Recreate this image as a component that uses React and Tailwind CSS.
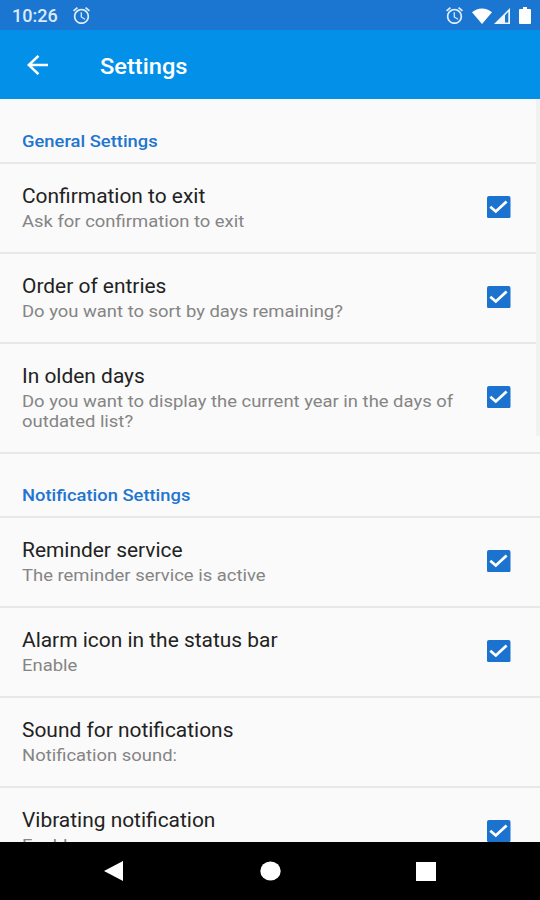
import React, { useState } from 'react';

const sections = [
  {
    title: 'General Settings',
    items: [
      { id: 'exit', label: 'Confirmation to exit', summary: 'Ask for confirmation to exit', checkable: true },
      { id: 'order', label: 'Order of entries', summary: 'Do you want to sort by days remaining?', checkable: true },
      {
        id: 'olden',
        label: 'In olden days',
        summary: 'Do you want to display the current year in the days of outdated list?',
        checkable: true
      }
    ]
  },
  {
    title: 'Notification Settings',
    items: [
      { id: 'reminder', label: 'Reminder service', summary: 'The reminder service is active', checkable: true },
      { id: 'alarm', label: 'Alarm icon in the status bar', summary: 'Enable', checkable: true },
      { id: 'sound', label: 'Sound for notifications', summary: 'Notification sound:', checkable: false },
      { id: 'vibrate', label: 'Vibrating notification', summary: 'Enable', checkable: true }
    ]
  }
];

const AlarmIcon = () => (
  <svg className="h-[17px] w-[17px]" viewBox="2 1.8 20 20.2" preserveAspectRatio="none" fill="#e0edfa">
    <path d="M22 5.72l-4.6-3.86-1.29 1.53 4.6 3.86L22 5.72zM7.88 3.39L6.6 1.86 2 5.71l1.29 1.53 4.59-3.85zM12.5 8H11v6l4.75 2.85.75-1.23-4-2.37V8zM12 4c-4.97 0-9 4.03-9 9s4.02 9 9 9c4.97 0 9-4.03 9-9s-4.03-9-9-9zm0 16c-3.87 0-7-3.13-7-7s3.13-7 7-7 7 3.13 7 7-3.13 7-7 7z" />
  </svg>
);

const StatusBar = () => (
  <div className="flex h-[30px] shrink-0 items-center bg-[#1b76d2] pl-3 pr-[9px] pt-px">
    <span className="w-[61px] pt-px text-[18px] font-medium leading-none text-[#dceafa]">10:26</span>
    <AlarmIcon />
    <div className="ml-auto flex items-center">
      <AlarmIcon />
      <svg className="ml-[9px] h-4 w-5" viewBox="0 0 20 16" fill="#fff">
        <path d="M10 16L0 4.2C5.5-.9 14.5-.9 20 4.2z" />
      </svg>
      <svg className="ml-[2px] h-4 w-4" viewBox="0 0 16 16">
        <path d="M0 16L16 0V16z" fill="#eef5fc" />
        <path d="M11 7.2L14.3 3.8V14.5H11z" fill="#1b76d2" />
      </svg>
      <svg className="ml-[9px] h-[17px] w-3" viewBox="0 0 12 17" fill="#fff">
        <path d="M4 0h4v2h3a1 1 0 0 1 1 1v13a1 1 0 0 1-1 1H1a1 1 0 0 1-1-1V3a1 1 0 0 1 1-1h3z" />
      </svg>
    </div>
  </div>
);

const AppBar = () => (
  <header className="flex h-[69px] shrink-0 items-center bg-[#0290e9] pl-[27px] text-white">
    <button aria-label="Back" className="w-[73px]">
      <svg className="h-5 w-[21px]" viewBox="4 4 16 16" preserveAspectRatio="none" fill="currentColor">
        <path d="M20 11H7.83l5.59-5.59L12 4l-8 8 8 8 1.41-1.41L7.83 13H20v-2z" />
      </svg>
    </button>
    <h1 className="origin-left scale-x-[1.075] pt-[4px] text-[22px] font-medium leading-none">Settings</h1>
  </header>
);

const Checkbox = ({ checked, onChange, label }) => (
  <button role="checkbox" aria-checked={checked} aria-label={label} onClick={onChange} className="h-[22px] w-6 shrink-0">
    <svg className="h-[22px] w-6" viewBox="0 0 24 22">
      {checked ? (
        <>
          <rect width="23.5" height="22.3" rx="2" fill="#1b72cf" />
          <path d="M3.3 10.8L8.8 15.5L19.6 5.5" fill="none" stroke="#fff" strokeWidth="2.8" />
        </>
      ) : (
        <rect x="1" y="1" width="22" height="20" rx="2" fill="none" stroke="#757575" strokeWidth="2" />
      )}
    </svg>
  </button>
);

const SettingRow = ({ item, checked, onToggle }) => (
  <div className="flex items-center border-b-2 border-[#e8e8e8] pb-[21px] pl-[22px] pr-[29px] pt-[19px]">
    <div className="w-[415px]">
      <p className="origin-left scale-x-[1.046] text-[20px] leading-[26px] text-[#222]">{item.label}</p>
      <p className="origin-left scale-x-[1.084] pt-[2px] text-[17px] leading-[20px] text-[#858585]">{item.summary}</p>
    </div>
    {item.checkable && (
      <div className="ml-auto flex">
        <Checkbox checked={checked} onChange={onToggle} label={item.label} />
      </div>
    )}
  </div>
);

const App = () => {
  const [disabled, setDisabled] = useState({});

  const toggle = (id) => setDisabled({ ...disabled, [id]: !disabled[id] });

  return (
    <div className="flex h-[900px] w-[540px] flex-col overflow-hidden bg-[#fafafa] font-['Roboto',sans-serif]">
      <StatusBar />
      <AppBar />
      <main className="relative min-h-0 flex-1 overflow-hidden pt-px">
        {sections.map((section) => (
          <section key={section.title}>
            <h2 className="h-[64px] border-b-2 border-[#e8e8e8] pl-[22px] pt-[31px] text-[17px] font-medium leading-[20px] text-[#2275cf]">
              <span className="inline-block origin-left scale-x-[1.08]">{section.title}</span>
            </h2>
            {section.items.map((item) => (
              <SettingRow
                key={item.id}
                item={item}
                checked={!disabled[item.id]}
                onToggle={() => toggle(item.id)}
              />
            ))}
          </section>
        ))}
        <div className="absolute right-0 top-0 h-[337px] w-1 bg-[#f2f2f2]" />
      </main>
      <nav className="flex h-[58px] shrink-0 items-center bg-black pl-[104px]">
        <svg className="h-5 w-5" viewBox="0 0 20 20" fill="#fff">
          <path d="M0 10L19 0V20z" />
        </svg>
        <svg className="ml-[136px] h-5 w-[21px]" viewBox="0 0 21 20" fill="#fff">
          <ellipse cx="10.5" cy="10" rx="10.2" ry="9.5" />
        </svg>
        <div className="ml-[135px] h-[19px] w-[20px] bg-white" />
      </nav>
    </div>
  );
};

export default App;
